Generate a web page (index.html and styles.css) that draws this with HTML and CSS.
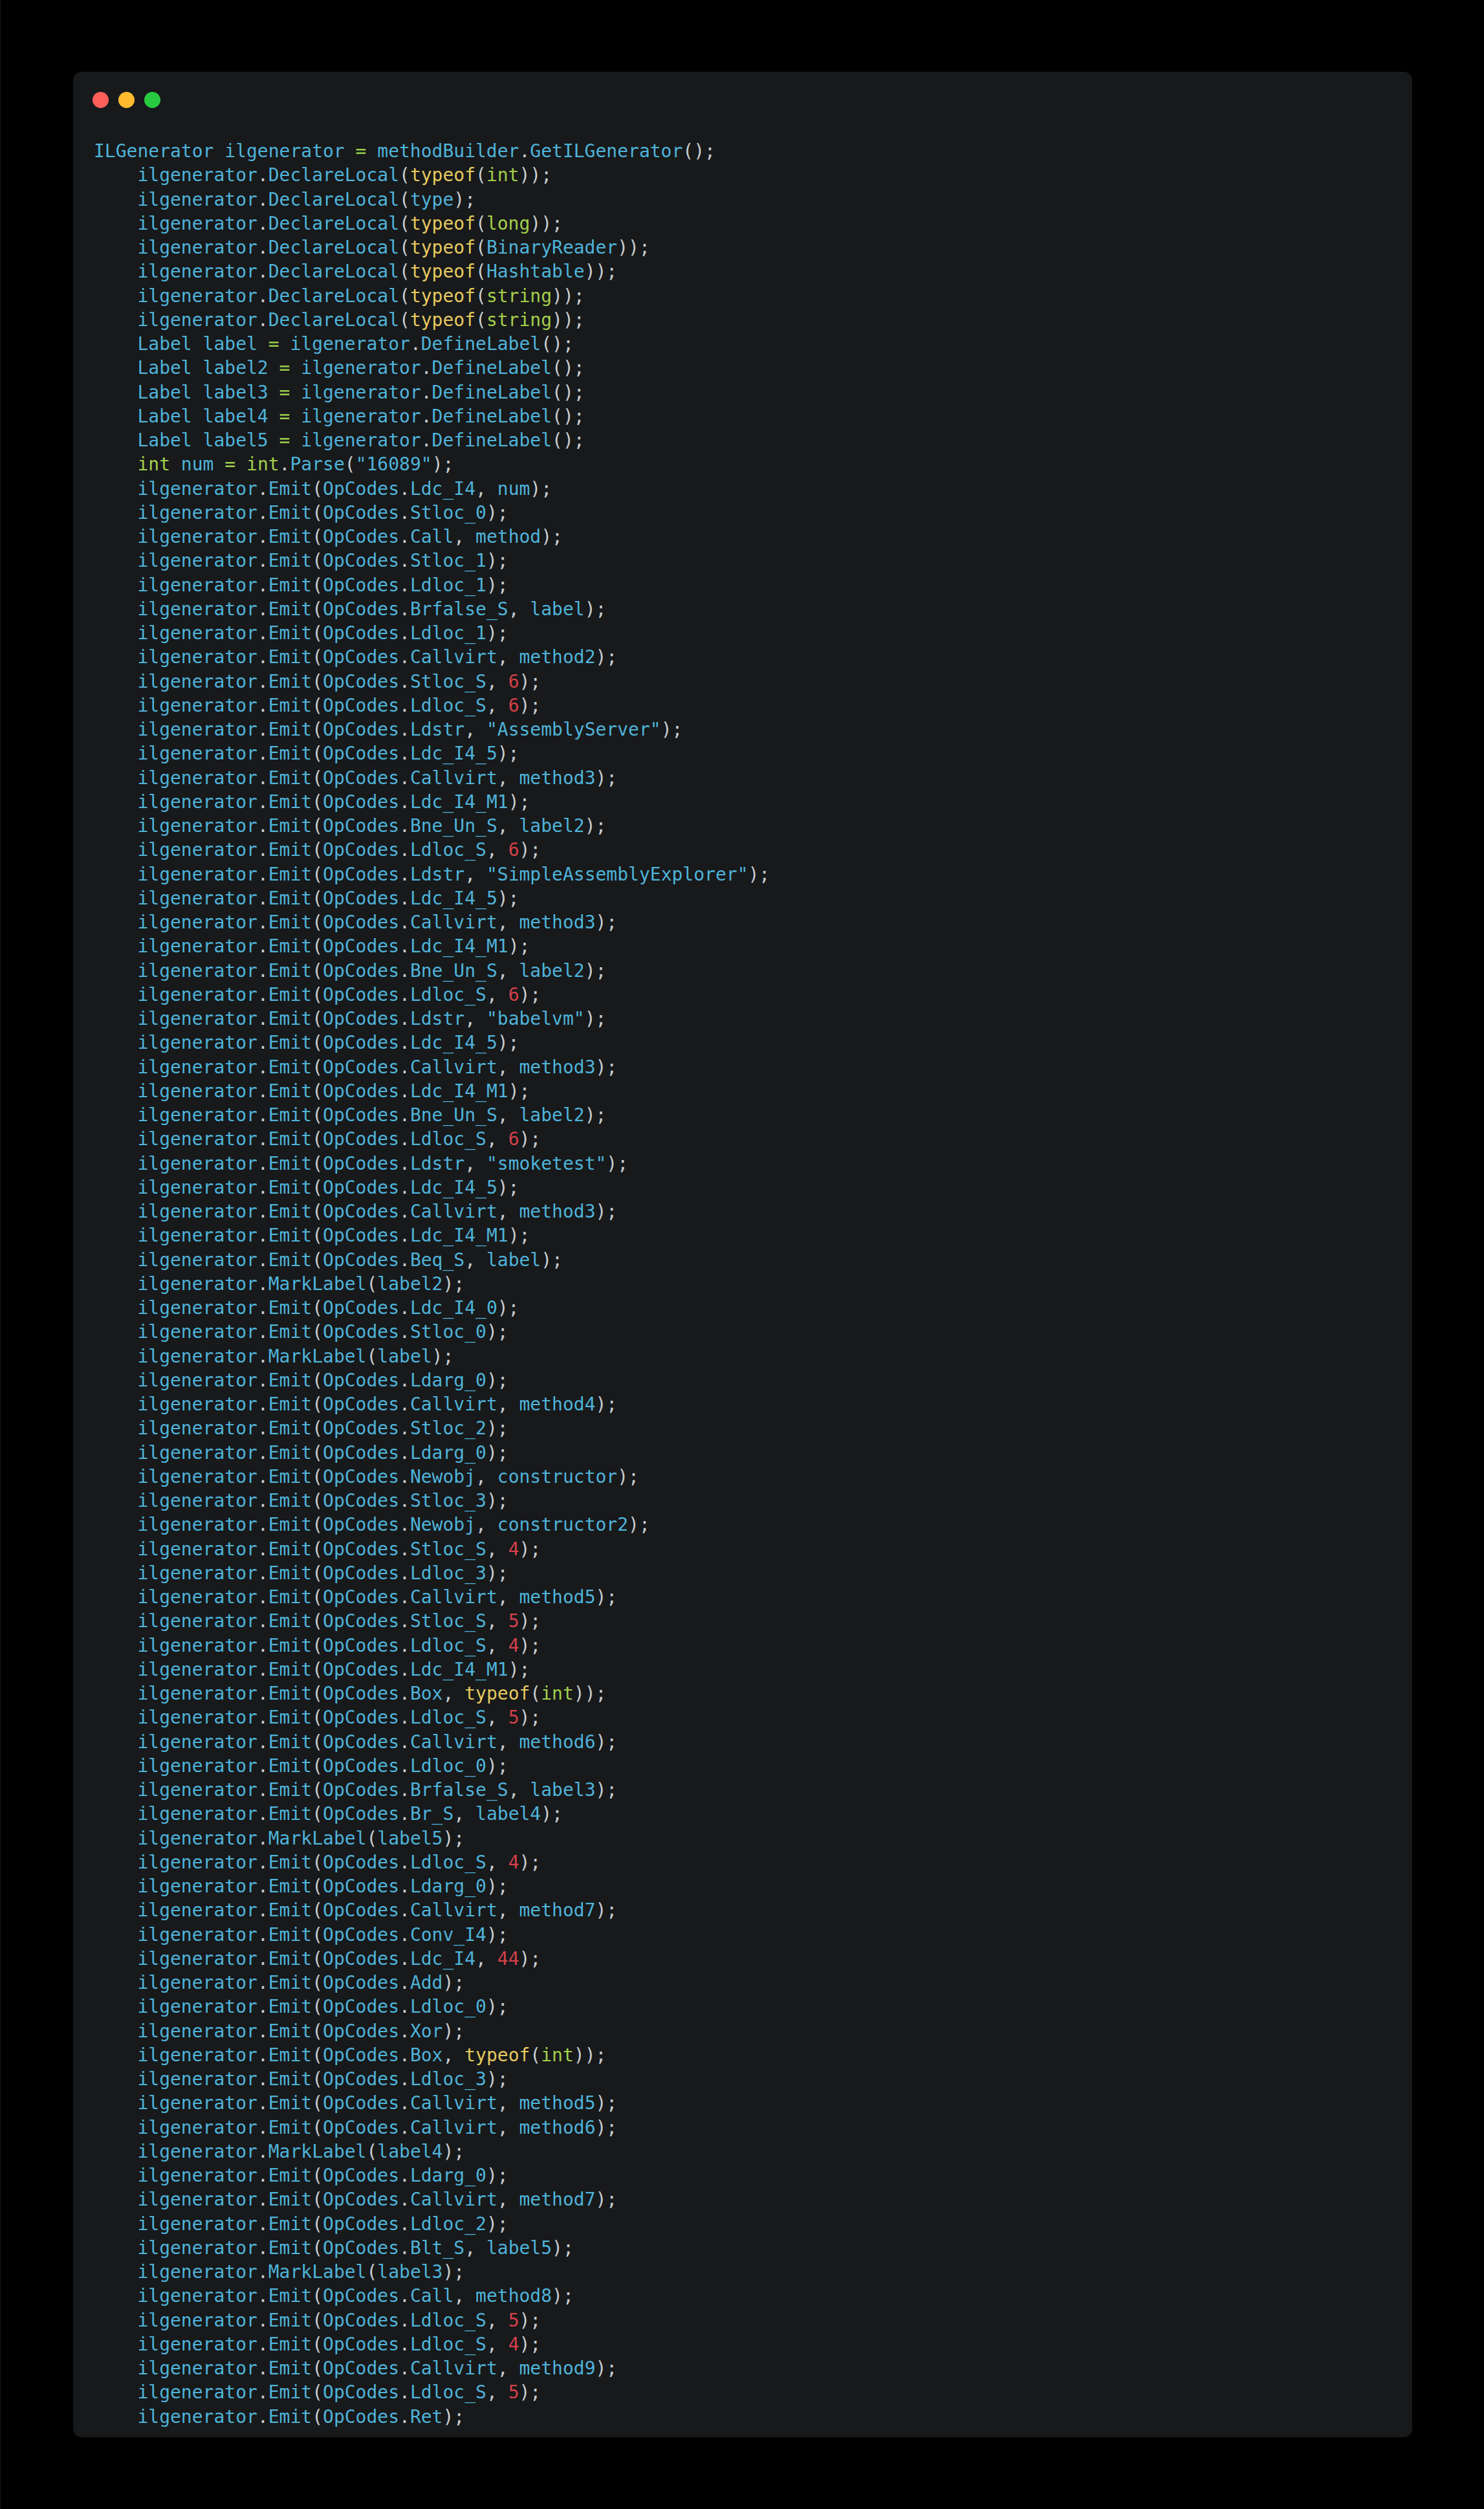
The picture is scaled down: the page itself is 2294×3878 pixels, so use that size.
FILE: index.html
```html
<!DOCTYPE html>
<html lang="en">
<head>
<meta charset="utf-8">
<title>ILGenerator</title>
<link rel="stylesheet" href="styles.css">
</head>
<body>
<main class="page">
<section class="window">
<div class="dots"><span class="dot red"></span><span class="dot yellow"></span><span class="dot green"></span></div>
<pre class="code"><code>ILGenerator ilgenerator <span class="o">=</span> methodBuilder<span class="p">.</span>GetILGenerator<span class="p">();</span>
    ilgenerator<span class="p">.</span>DeclareLocal<span class="p">(</span><span class="k">typeof</span><span class="p">(</span><span class="t">int</span><span class="p">));</span>
    ilgenerator<span class="p">.</span>DeclareLocal<span class="p">(</span>type<span class="p">);</span>
    ilgenerator<span class="p">.</span>DeclareLocal<span class="p">(</span><span class="k">typeof</span><span class="p">(</span><span class="t">long</span><span class="p">));</span>
    ilgenerator<span class="p">.</span>DeclareLocal<span class="p">(</span><span class="k">typeof</span><span class="p">(</span>BinaryReader<span class="p">));</span>
    ilgenerator<span class="p">.</span>DeclareLocal<span class="p">(</span><span class="k">typeof</span><span class="p">(</span>Hashtable<span class="p">));</span>
    ilgenerator<span class="p">.</span>DeclareLocal<span class="p">(</span><span class="k">typeof</span><span class="p">(</span><span class="t">string</span><span class="p">));</span>
    ilgenerator<span class="p">.</span>DeclareLocal<span class="p">(</span><span class="k">typeof</span><span class="p">(</span><span class="t">string</span><span class="p">));</span>
    Label label <span class="o">=</span> ilgenerator<span class="p">.</span>DefineLabel<span class="p">();</span>
    Label label2 <span class="o">=</span> ilgenerator<span class="p">.</span>DefineLabel<span class="p">();</span>
    Label label3 <span class="o">=</span> ilgenerator<span class="p">.</span>DefineLabel<span class="p">();</span>
    Label label4 <span class="o">=</span> ilgenerator<span class="p">.</span>DefineLabel<span class="p">();</span>
    Label label5 <span class="o">=</span> ilgenerator<span class="p">.</span>DefineLabel<span class="p">();</span>
    <span class="t">int</span> num <span class="o">=</span> <span class="t">int</span><span class="p">.</span>Parse<span class="p">(</span>"16089"<span class="p">);</span>
    ilgenerator<span class="p">.</span>Emit<span class="p">(</span>OpCodes<span class="p">.</span>Ldc_I4<span class="p">,</span> num<span class="p">);</span>
    ilgenerator<span class="p">.</span>Emit<span class="p">(</span>OpCodes<span class="p">.</span>Stloc_0<span class="p">);</span>
    ilgenerator<span class="p">.</span>Emit<span class="p">(</span>OpCodes<span class="p">.</span>Call<span class="p">,</span> method<span class="p">);</span>
    ilgenerator<span class="p">.</span>Emit<span class="p">(</span>OpCodes<span class="p">.</span>Stloc_1<span class="p">);</span>
    ilgenerator<span class="p">.</span>Emit<span class="p">(</span>OpCodes<span class="p">.</span>Ldloc_1<span class="p">);</span>
    ilgenerator<span class="p">.</span>Emit<span class="p">(</span>OpCodes<span class="p">.</span>Brfalse_S<span class="p">,</span> label<span class="p">);</span>
    ilgenerator<span class="p">.</span>Emit<span class="p">(</span>OpCodes<span class="p">.</span>Ldloc_1<span class="p">);</span>
    ilgenerator<span class="p">.</span>Emit<span class="p">(</span>OpCodes<span class="p">.</span>Callvirt<span class="p">,</span> method2<span class="p">);</span>
    ilgenerator<span class="p">.</span>Emit<span class="p">(</span>OpCodes<span class="p">.</span>Stloc_S<span class="p">,</span> <span class="n">6</span><span class="p">);</span>
    ilgenerator<span class="p">.</span>Emit<span class="p">(</span>OpCodes<span class="p">.</span>Ldloc_S<span class="p">,</span> <span class="n">6</span><span class="p">);</span>
    ilgenerator<span class="p">.</span>Emit<span class="p">(</span>OpCodes<span class="p">.</span>Ldstr<span class="p">,</span> "AssemblyServer"<span class="p">);</span>
    ilgenerator<span class="p">.</span>Emit<span class="p">(</span>OpCodes<span class="p">.</span>Ldc_I4_5<span class="p">);</span>
    ilgenerator<span class="p">.</span>Emit<span class="p">(</span>OpCodes<span class="p">.</span>Callvirt<span class="p">,</span> method3<span class="p">);</span>
    ilgenerator<span class="p">.</span>Emit<span class="p">(</span>OpCodes<span class="p">.</span>Ldc_I4_M1<span class="p">);</span>
    ilgenerator<span class="p">.</span>Emit<span class="p">(</span>OpCodes<span class="p">.</span>Bne_Un_S<span class="p">,</span> label2<span class="p">);</span>
    ilgenerator<span class="p">.</span>Emit<span class="p">(</span>OpCodes<span class="p">.</span>Ldloc_S<span class="p">,</span> <span class="n">6</span><span class="p">);</span>
    ilgenerator<span class="p">.</span>Emit<span class="p">(</span>OpCodes<span class="p">.</span>Ldstr<span class="p">,</span> "SimpleAssemblyExplorer"<span class="p">);</span>
    ilgenerator<span class="p">.</span>Emit<span class="p">(</span>OpCodes<span class="p">.</span>Ldc_I4_5<span class="p">);</span>
    ilgenerator<span class="p">.</span>Emit<span class="p">(</span>OpCodes<span class="p">.</span>Callvirt<span class="p">,</span> method3<span class="p">);</span>
    ilgenerator<span class="p">.</span>Emit<span class="p">(</span>OpCodes<span class="p">.</span>Ldc_I4_M1<span class="p">);</span>
    ilgenerator<span class="p">.</span>Emit<span class="p">(</span>OpCodes<span class="p">.</span>Bne_Un_S<span class="p">,</span> label2<span class="p">);</span>
    ilgenerator<span class="p">.</span>Emit<span class="p">(</span>OpCodes<span class="p">.</span>Ldloc_S<span class="p">,</span> <span class="n">6</span><span class="p">);</span>
    ilgenerator<span class="p">.</span>Emit<span class="p">(</span>OpCodes<span class="p">.</span>Ldstr<span class="p">,</span> "babelvm"<span class="p">);</span>
    ilgenerator<span class="p">.</span>Emit<span class="p">(</span>OpCodes<span class="p">.</span>Ldc_I4_5<span class="p">);</span>
    ilgenerator<span class="p">.</span>Emit<span class="p">(</span>OpCodes<span class="p">.</span>Callvirt<span class="p">,</span> method3<span class="p">);</span>
    ilgenerator<span class="p">.</span>Emit<span class="p">(</span>OpCodes<span class="p">.</span>Ldc_I4_M1<span class="p">);</span>
    ilgenerator<span class="p">.</span>Emit<span class="p">(</span>OpCodes<span class="p">.</span>Bne_Un_S<span class="p">,</span> label2<span class="p">);</span>
    ilgenerator<span class="p">.</span>Emit<span class="p">(</span>OpCodes<span class="p">.</span>Ldloc_S<span class="p">,</span> <span class="n">6</span><span class="p">);</span>
    ilgenerator<span class="p">.</span>Emit<span class="p">(</span>OpCodes<span class="p">.</span>Ldstr<span class="p">,</span> "smoketest"<span class="p">);</span>
    ilgenerator<span class="p">.</span>Emit<span class="p">(</span>OpCodes<span class="p">.</span>Ldc_I4_5<span class="p">);</span>
    ilgenerator<span class="p">.</span>Emit<span class="p">(</span>OpCodes<span class="p">.</span>Callvirt<span class="p">,</span> method3<span class="p">);</span>
    ilgenerator<span class="p">.</span>Emit<span class="p">(</span>OpCodes<span class="p">.</span>Ldc_I4_M1<span class="p">);</span>
    ilgenerator<span class="p">.</span>Emit<span class="p">(</span>OpCodes<span class="p">.</span>Beq_S<span class="p">,</span> label<span class="p">);</span>
    ilgenerator<span class="p">.</span>MarkLabel<span class="p">(</span>label2<span class="p">);</span>
    ilgenerator<span class="p">.</span>Emit<span class="p">(</span>OpCodes<span class="p">.</span>Ldc_I4_0<span class="p">);</span>
    ilgenerator<span class="p">.</span>Emit<span class="p">(</span>OpCodes<span class="p">.</span>Stloc_0<span class="p">);</span>
    ilgenerator<span class="p">.</span>MarkLabel<span class="p">(</span>label<span class="p">);</span>
    ilgenerator<span class="p">.</span>Emit<span class="p">(</span>OpCodes<span class="p">.</span>Ldarg_0<span class="p">);</span>
    ilgenerator<span class="p">.</span>Emit<span class="p">(</span>OpCodes<span class="p">.</span>Callvirt<span class="p">,</span> method4<span class="p">);</span>
    ilgenerator<span class="p">.</span>Emit<span class="p">(</span>OpCodes<span class="p">.</span>Stloc_2<span class="p">);</span>
    ilgenerator<span class="p">.</span>Emit<span class="p">(</span>OpCodes<span class="p">.</span>Ldarg_0<span class="p">);</span>
    ilgenerator<span class="p">.</span>Emit<span class="p">(</span>OpCodes<span class="p">.</span>Newobj<span class="p">,</span> constructor<span class="p">);</span>
    ilgenerator<span class="p">.</span>Emit<span class="p">(</span>OpCodes<span class="p">.</span>Stloc_3<span class="p">);</span>
    ilgenerator<span class="p">.</span>Emit<span class="p">(</span>OpCodes<span class="p">.</span>Newobj<span class="p">,</span> constructor2<span class="p">);</span>
    ilgenerator<span class="p">.</span>Emit<span class="p">(</span>OpCodes<span class="p">.</span>Stloc_S<span class="p">,</span> <span class="n">4</span><span class="p">);</span>
    ilgenerator<span class="p">.</span>Emit<span class="p">(</span>OpCodes<span class="p">.</span>Ldloc_3<span class="p">);</span>
    ilgenerator<span class="p">.</span>Emit<span class="p">(</span>OpCodes<span class="p">.</span>Callvirt<span class="p">,</span> method5<span class="p">);</span>
    ilgenerator<span class="p">.</span>Emit<span class="p">(</span>OpCodes<span class="p">.</span>Stloc_S<span class="p">,</span> <span class="n">5</span><span class="p">);</span>
    ilgenerator<span class="p">.</span>Emit<span class="p">(</span>OpCodes<span class="p">.</span>Ldloc_S<span class="p">,</span> <span class="n">4</span><span class="p">);</span>
    ilgenerator<span class="p">.</span>Emit<span class="p">(</span>OpCodes<span class="p">.</span>Ldc_I4_M1<span class="p">);</span>
    ilgenerator<span class="p">.</span>Emit<span class="p">(</span>OpCodes<span class="p">.</span>Box<span class="p">,</span> <span class="k">typeof</span><span class="p">(</span><span class="t">int</span><span class="p">));</span>
    ilgenerator<span class="p">.</span>Emit<span class="p">(</span>OpCodes<span class="p">.</span>Ldloc_S<span class="p">,</span> <span class="n">5</span><span class="p">);</span>
    ilgenerator<span class="p">.</span>Emit<span class="p">(</span>OpCodes<span class="p">.</span>Callvirt<span class="p">,</span> method6<span class="p">);</span>
    ilgenerator<span class="p">.</span>Emit<span class="p">(</span>OpCodes<span class="p">.</span>Ldloc_0<span class="p">);</span>
    ilgenerator<span class="p">.</span>Emit<span class="p">(</span>OpCodes<span class="p">.</span>Brfalse_S<span class="p">,</span> label3<span class="p">);</span>
    ilgenerator<span class="p">.</span>Emit<span class="p">(</span>OpCodes<span class="p">.</span>Br_S<span class="p">,</span> label4<span class="p">);</span>
    ilgenerator<span class="p">.</span>MarkLabel<span class="p">(</span>label5<span class="p">);</span>
    ilgenerator<span class="p">.</span>Emit<span class="p">(</span>OpCodes<span class="p">.</span>Ldloc_S<span class="p">,</span> <span class="n">4</span><span class="p">);</span>
    ilgenerator<span class="p">.</span>Emit<span class="p">(</span>OpCodes<span class="p">.</span>Ldarg_0<span class="p">);</span>
    ilgenerator<span class="p">.</span>Emit<span class="p">(</span>OpCodes<span class="p">.</span>Callvirt<span class="p">,</span> method7<span class="p">);</span>
    ilgenerator<span class="p">.</span>Emit<span class="p">(</span>OpCodes<span class="p">.</span>Conv_I4<span class="p">);</span>
    ilgenerator<span class="p">.</span>Emit<span class="p">(</span>OpCodes<span class="p">.</span>Ldc_I4<span class="p">,</span> <span class="n">44</span><span class="p">);</span>
    ilgenerator<span class="p">.</span>Emit<span class="p">(</span>OpCodes<span class="p">.</span>Add<span class="p">);</span>
    ilgenerator<span class="p">.</span>Emit<span class="p">(</span>OpCodes<span class="p">.</span>Ldloc_0<span class="p">);</span>
    ilgenerator<span class="p">.</span>Emit<span class="p">(</span>OpCodes<span class="p">.</span>Xor<span class="p">);</span>
    ilgenerator<span class="p">.</span>Emit<span class="p">(</span>OpCodes<span class="p">.</span>Box<span class="p">,</span> <span class="k">typeof</span><span class="p">(</span><span class="t">int</span><span class="p">));</span>
    ilgenerator<span class="p">.</span>Emit<span class="p">(</span>OpCodes<span class="p">.</span>Ldloc_3<span class="p">);</span>
    ilgenerator<span class="p">.</span>Emit<span class="p">(</span>OpCodes<span class="p">.</span>Callvirt<span class="p">,</span> method5<span class="p">);</span>
    ilgenerator<span class="p">.</span>Emit<span class="p">(</span>OpCodes<span class="p">.</span>Callvirt<span class="p">,</span> method6<span class="p">);</span>
    ilgenerator<span class="p">.</span>MarkLabel<span class="p">(</span>label4<span class="p">);</span>
    ilgenerator<span class="p">.</span>Emit<span class="p">(</span>OpCodes<span class="p">.</span>Ldarg_0<span class="p">);</span>
    ilgenerator<span class="p">.</span>Emit<span class="p">(</span>OpCodes<span class="p">.</span>Callvirt<span class="p">,</span> method7<span class="p">);</span>
    ilgenerator<span class="p">.</span>Emit<span class="p">(</span>OpCodes<span class="p">.</span>Ldloc_2<span class="p">);</span>
    ilgenerator<span class="p">.</span>Emit<span class="p">(</span>OpCodes<span class="p">.</span>Blt_S<span class="p">,</span> label5<span class="p">);</span>
    ilgenerator<span class="p">.</span>MarkLabel<span class="p">(</span>label3<span class="p">);</span>
    ilgenerator<span class="p">.</span>Emit<span class="p">(</span>OpCodes<span class="p">.</span>Call<span class="p">,</span> method8<span class="p">);</span>
    ilgenerator<span class="p">.</span>Emit<span class="p">(</span>OpCodes<span class="p">.</span>Ldloc_S<span class="p">,</span> <span class="n">5</span><span class="p">);</span>
    ilgenerator<span class="p">.</span>Emit<span class="p">(</span>OpCodes<span class="p">.</span>Ldloc_S<span class="p">,</span> <span class="n">4</span><span class="p">);</span>
    ilgenerator<span class="p">.</span>Emit<span class="p">(</span>OpCodes<span class="p">.</span>Callvirt<span class="p">,</span> method9<span class="p">);</span>
    ilgenerator<span class="p">.</span>Emit<span class="p">(</span>OpCodes<span class="p">.</span>Ldloc_S<span class="p">,</span> <span class="n">5</span><span class="p">);</span>
    ilgenerator<span class="p">.</span>Emit<span class="p">(</span>OpCodes<span class="p">.</span>Ret<span class="p">);</span></code></pre>
</section>
</main>
</body>
</html>
```
FILE: styles.css
```css
html, body {
  margin: 0;
  background: #000;
}
.page {
  box-sizing: border-box;
  width: 2294px;
  height: 3878px;
  padding: 111px 111px 111px 112px;
  border-left: 1px solid #1a1a1a;
}
.window {
  box-sizing: border-box;
  height: 3656px;
  padding: 31px 32px 0 30px;
  background: #17191b;
  border-radius: 13px;
  overflow: hidden;
}
.dots {
  display: flex;
  gap: 15px;
}
.dot {
  width: 25px;
  height: 25px;
  border-radius: 50%;
}
.red { background: #ff5f58; }
.yellow { background: #ffbc2e; }
.green { background: #28ca42; }
.code {
  margin: 48px 0 0;
  padding-left: 2px;
  font-family: "DejaVu Sans Mono", monospace;
  font-size: 28px;
  line-height: 37.25px;
  color: #4fb3d9;
}
.code code { font: inherit; }
.p { color: #c9cccf; }
.o { color: #9ccc4a; }
.k { color: #e6c95f; }
.t { color: #a3cf4b; }
.n { color: #d5404a; }
```
